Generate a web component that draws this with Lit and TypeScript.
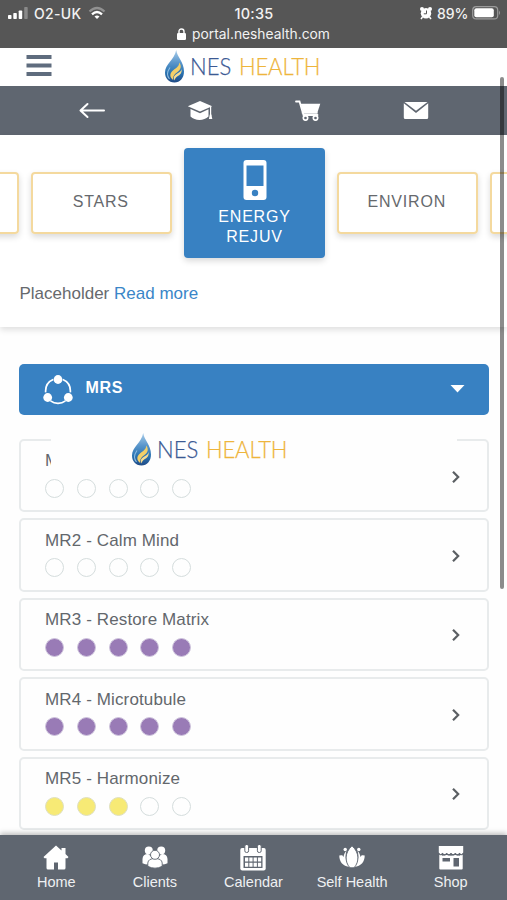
import { LitElement, html, css, svg } from "lit";
import { customElement, property } from "lit/decorators.js";
import { classMap } from "lit/directives/class-map.js";

@customElement("nes-logo")
class NesLogo extends LitElement {
  static styles = css`
    :host { display: flex; width: 166px; height: 36px; align-items: flex-start; }
    .mark { display: block; flex: none; }
    .word { font-family: Lato, "Liberation Sans", sans-serif; font-size: 24px; font-weight: 300; line-height: 30px; white-space: nowrap; -webkit-text-stroke: .25px currentColor; margin-top: 2px; transform-origin: left; transform: scaleX(.92); }
    .blue { color: #3c5a94; margin-left: 5px; width: 49px; }
    .gold { color: #eeb53c; letter-spacing: -.2px; }
  `;
  render() {
    return html`<svg class="mark" width="21" height="36" viewBox="0 0 21 36">
      <defs>
        <linearGradient id="drop" x1="0" y1="0" x2="0" y2="1">
          <stop offset="0" stop-color="#a9cdea" />
          <stop offset=".38" stop-color="#5b97cc" />
          <stop offset=".7" stop-color="#2b74b2" />
          <stop offset="1" stop-color="#204b86" />
        </linearGradient>
      </defs>
      <path d="M12.200 1C13 8 20 12.500 20 22.500C20 29 16 33.500 10.500 33.500C4.500 33.500 1 29 1 23.500C1 15 10.500 11 12.200 1Z" fill="url(#drop)" />
      <path d="M15.200 13.500C17.800 17 17 20.500 13.500 23C10 25.500 8.800 27.500 9.300 31C5.500 28.500 5.300 24.500 9.200 21.300C12.500 18.700 15.200 17.200 15.200 13.500Z" fill="#f3cf68" />
      <path d="M17.500 20C18.300 24 15.800 26 13.500 27.300C11.500 28.600 10.800 29.800 11 31.500C8.900 29 9.700 27 12.500 25C15.500 23 17.300 22.500 17.500 20Z" fill="#f7dc91" />
      <path d="M6 18.500C2.800 23 3 27 5.500 30" fill="none" stroke="#8dbde2" stroke-width="1.100" />
    </svg><span class="word blue">NES</span><span class="word gold">HEALTH</span>`;
  }
}

@customElement("rating-card")
class RatingCard extends LitElement {
  @property() name = "";
  @property({ type: Number }) score = 0;
  @property() tone = "purple";
  static styles = css`
    :host { display: flex; box-sizing: border-box; height: 73.400px; align-items: center; justify-content: space-between;
      padding: 0 25px 0 24px; border: 2px solid #e8ebec; border-radius: 5px; background: #fefefe; }
    .title { font-size: 17px; line-height: 20px; letter-spacing: .13px; color: #63676c; white-space: nowrap; }
    .dots { display: flex; gap: 12.800px; margin-top: 7.500px; }
    .dot { box-sizing: border-box; width: 19px; height: 19px; border-radius: 50%; border: 1.300px solid #d5dddd; }
    .purple { background: #997bb6; border-color: #cfc5dd; }
    .yellow { background: #f7ea75; border-color: #dfe0c0; }
    .body { padding-bottom: 2px; }
    .chevron { display: block; margin-top: 2px; }
  `;
  render() {
    return html`<div class="body">
        <div class="title">${this.name}</div>
        <div class="dots">${[0, 1, 2, 3, 4].map((i) => html`<span class=${classMap({ dot: true, [this.tone]: i < this.score })}></span>`)}</div>
      </div>
      <svg class="chevron" width="12" height="16" viewBox="0 0 12 16"><path d="M3 2.700L8.200 8L3 13.300" fill="none" stroke="#5b5f63" stroke-width="2.200" /></svg>`;
  }
}

const icons = {
  back: svg`<path d="M8.500 4L1.500 10.500L8.500 17M2 10.500H25" fill="none" stroke="#fff" stroke-width="2" stroke-linecap="round" stroke-linejoin="round" />`,
  cap: svg`<path d="M.8 6.200L13 1L25.200 6.200L13 11.500Z" /><path d="M3.500 9L13 13.200L21.500 9.300V16.500C17 21 8 21 3.500 16.500Z" /><path d="M23.600 7V16" stroke="#fff" stroke-width="1.200" /><path d="M22.800 14.500h1.600l.9 4.500h-3.400z" />`,
  cart: svg`<path d="M1 1.500H4.500L8.500 15H22.500M7.500 12.800H22" fill="none" stroke="#fff" stroke-width="1.800" stroke-linecap="round" /><path d="M5.600 3.800H25.300L22.600 12H8Z" /><g fill="none" stroke="#fff" stroke-width="1.700"><circle cx="10.500" cy="18" r="2.200" /><circle cx="20.500" cy="18" r="2.200" /></g>`,
  mail: svg`<path d="M1.500 2H24.500L13 10.800Z" /><path d="M.8 3.200L13 12.900L25.200 3.200V17.500Q25.200 19 23.700 19H2.300Q.8 19 .8 17.500Z" />`,
  home: svg`<path d="M13 .5L18.500 5.500V3H22.500V9L25.500 12L24.500 13.200H22.500V23Q22.500 24.500 21 24.500H15V17.500H11V24.500H5Q3.500 24.500 3.500 23V13.200H1.500L.5 12Z" />`,
  clients: svg`<circle cx="6.800" cy="5.500" r="4" /><circle cx="19.200" cy="5.500" r="4" /><path d="M.5 18.300V14Q.8 9 6 9L10 12V19Q5 20.500 .5 18.300ZM25.500 18.300V14Q25.200 9 20 9L16 12V19Q21 20.500 25.500 18.300Z" /><g stroke="#5f6670" stroke-width=".9"><path d="M5.800 21.300V18Q6.200 13.500 13 13.500Q19.800 13.500 20.200 18V21.300Q13 25 5.800 21.300Z" /><circle cx="13" cy="9.800" r="4.500" /></g>`,
  calendar: svg`<path d="M2 3H24Q25.700 3 25.700 5V23.500Q25.700 25.500 23.700 25.500H2.300Q.3 25.500 .3 23.500V5Q.3 3 2 3Z" /><g stroke="#5f6670" stroke-width="1" fill="#fff"><rect x="4.800" y="-.5" width="3.800" height="8" rx="1.700" /><rect x="17.400" y="-.5" width="3.800" height="8" rx="1.700" /></g><path d="M3.500 11h19v12h-19z" fill="#5f6670" /><path d="M5 12.500h3.300v4H5zM9.300 12.500h3.300v4H9.300zM13.600 12.500h3.300v4h-3.300zM17.900 12.500h3.300v4h-3.300zM5 17.700h3.300v4H5zM9.300 17.700h3.300v4H9.300zM13.600 17.700h3.300v4h-3.300zM17.900 17.700h3.300v4h-3.300z" fill="#fff" />`,
  lotus: svg`<path d="M7.500 6C5.500 11.500 7 18 11 22C3.500 21.500 .2 16 .3 10.500Q2 10 3.300 10.300L4.500 12C4.800 9.500 6 7 7.500 6ZM18.500 6C20.500 11.500 19 18 15 22C22.500 21.500 25.800 16 25.700 10.500Q24 10 22.700 10.300L21.500 12C21.200 9.500 20 7 18.500 6Z" /><circle cx="6.200" cy="4.500" r="1.700" /><circle cx="19.800" cy="4.500" r="1.700" /><path d="M13 .8C20.500 7.500 20.500 17 15 22.800H11C5.500 17 5.500 7.500 13 .8Z" stroke="#5f6670" stroke-width=".9" />`,
  shop: svg`<path d="M.8 1H25.200V7.500Q23.500 10.500 21.500 8Q19.500 10.500 17.300 8Q15.200 10.500 13 8Q10.800 10.500 8.700 8Q6.500 10.500 4.500 8Q2.500 10.500 .8 7.500Z" /><path d="M1.300 8.500L4.500 10.700L8.700 10L13 10.700L17.300 10L21.500 10.700L24.700 8.500V23.500Q24.700 24.500 23.700 24.500H2.300Q1.300 24.500 1.300 23.500Z" /><path d="M1 8.400Q2.500 11 4.500 8.700Q6.500 11 8.700 8.700Q10.800 11 13 8.700Q15.200 11 17.300 8.700Q19.500 11 21.500 8.700Q23.500 11 25 8.400" fill="none" stroke="#5f6670" stroke-width="1.100" /><path d="M4.500 13h7.500v3.500H4.500zM15.500 13h5.500V21.500h-5.500z" fill="#5f6670" />`,
};

const icon = (name: keyof typeof icons, height = 26) =>
  html`<svg width="26" height=${height} viewBox=${`0 0 26 ${height}`} fill="#fff">${icons[name]}</svg>`;

@customElement("app-root")
class AppRoot extends LitElement {
  static styles = css`
    :host { display: flex; flex-direction: column; position: relative; width: 507px; height: 900px; overflow: hidden;
      background: #fefefe; font-family: "Liberation Sans", Arial, sans-serif; color: #66696d; }
    .status { box-sizing: border-box; flex: none; height: 48px; background: #565656; color: #f2f2f2; font-family: Inter, sans-serif; padding-top: 3px; }
    .row { display: grid; grid-template-columns: 1fr auto 1fr; align-items: center; height: 20px; padding: 0 6px 0 8px; font-size: 14px; font-weight: 500; }
    .time { font-size: 14.500px; letter-spacing: .2px; margin-right: 1px; }
    .side { display: flex; align-items: center; }
    .end { justify-content: flex-end; gap: 3.500px; }
    .carrier { margin: 0 7px 0 6px; letter-spacing: .3px; }
    .url { display: flex; align-items: center; justify-content: center; gap: 6px; height: 22px; font-size: 13.800px; }
    .header { display: grid; grid-template-columns: 26px 1fr; flex: none; height: 38px; padding-left: 26px; align-items: center; background: #fff; }
    .menu { margin-bottom: 3px; }
    .logo { margin-left: 112px; }
    .tools { display: flex; flex: none; height: 49px; padding: 0 37.500px; background: #5f6670; align-items: center; }
    .tool { flex: 1; display: flex; justify-content: center; }
    .intro { box-sizing: border-box; flex: none; height: 192px; background: #fff; box-shadow: 0 3px 6px rgba(0,0,0,.12); }
    .carousel { display: flex; width: 690px; margin-left: -122px; gap: 12px; height: 135px; align-items: center; }
    .tab { box-sizing: border-box; flex: none; width: 141px; height: 62px; display: flex; align-items: center; justify-content: center; border: 2px solid #f4d99e;
      border-radius: 4px; box-shadow: 0 3px 6px rgba(0,0,0,.15); font-size: 16px; letter-spacing: .8px; line-height: 20px; text-align: center; padding: 0 1.500px 2px 0; }
    .active { flex-direction: column; height: 110px; border: 0; background: #3881c2; color: #fff; gap: 7px; padding: 2px 0 0; }
    .active-name { width: 90px; }
    .note { padding: 13.500px 19.500px 0; font-size: 17px; line-height: 20px; }
    .link { color: #3a86c8; text-decoration: none; }
    .group { display: flex; flex: none; align-items: center; margin: 36.500px 18.500px 0 19px; height: 51.500px; background: #3881c2; border-radius: 5px; color: #fff; box-sizing: border-box; padding: 0 24px 0 24px; }
    .group-name { flex: 1; margin-left: 12.500px; font-weight: 700; font-size: 16px; letter-spacing: .7px; padding-bottom: 2px; }
    .list { display: flex; flex-direction: column; gap: 6px; margin: 24px 18.500px 0 19px; }
    .float { position: absolute; left: 51px; top: 432px; width: 406px; height: 38px; background: #fefefe; }
    .float-logo { margin-left: 79.500px; }
    .scroll { position: absolute; left: 499.500px; top: 77px; width: 4px; height: 512px; border-radius: 2px; background: rgba(0,0,0,.45); }
    .footer { position: absolute; left: 0; bottom: 0; box-sizing: border-box; width: 507px; height: 65px; padding: 0 7px; display: grid; grid-template-columns: repeat(5, 1fr);
      background: #5f6670; color: #eef0f2; box-shadow: 0 -2px 5px rgba(0,0,0,.25); }
    .item { display: flex; flex-direction: column; align-items: center; padding-top: 10px; gap: 3px; font-size: 14.500px; line-height: 17px; white-space: nowrap; }
  `;
  render() {
    const cards: [string, number, string][] = [
      ["MR1", 0, "purple"], ["MR2 - Calm Mind", 0, "purple"], ["MR3 - Restore Matrix", 5, "purple"],
      ["MR4 - Microtubule", 5, "purple"], ["MR5 - Harmonize", 3, "yellow"],
    ];
    const nav: [keyof typeof icons, string][] = [["home", "Home"], ["clients", "Clients"], ["calendar", "Calendar"], ["lotus", "Self Health"], ["shop", "Shop"]];
    return html`
      <div class="status">
        <div class="row">
          <div class="side">
            <svg width="20" height="12" viewBox="0 0 20 12" fill="#fff"><rect y="8" width="3.500" height="4" rx=".8" /><rect x="5.300" y="6" width="3.500" height="6" rx=".8" /><rect x="10.700" y="3.500" width="3.500" height="8.500" rx=".8" /><rect x="16.200" width="3.500" height="12" rx=".8" opacity=".3" /></svg>
            <span class="carrier">O2-UK</span>
            <svg width="18" height="14" viewBox="0 0 18 14" fill="none" stroke="#fff" stroke-width="2.300"><path d="M1.500 5.500Q9-1.500 16.500 5.500" opacity=".35" /><path d="M4 8.300Q9 3.600 14 8.300" /><path d="M6.500 10.500Q9 8.500 11.500 10.500L9 13Z" fill="#fff" stroke="none" /></svg>
          </div>
          <span class="time">10:35</span>
          <div class="side end">
            <svg width="14" height="14" viewBox="0 0 14 14"><circle cx="3" cy="3" r="2" fill="#fff" /><circle cx="11" cy="3" r="2" fill="#fff" /><circle cx="7" cy="7.300" r="5.200" fill="#fff" /><path d="M3.500 11L2 13M10.500 11L12 13" stroke="#fff" stroke-width="1.500" /><path d="M7.500 4.500V7.800H4.800" fill="none" stroke="#565656" /></svg>
            <span>89%</span>
            <svg width="29" height="14" viewBox="0 0 29 14"><rect x=".7" y=".7" width="25" height="12.200" rx="3.500" fill="none" stroke="#9b9b9b" stroke-width="1.200" /><rect x="2.300" y="2.300" width="19.500" height="9" rx="2" fill="#fff" /><path d="M27 4.500Q29 6.800 27 9Z" fill="#9b9b9b" /></svg>
          </div>
        </div>
        <div class="url">
          <svg width="9" height="12" viewBox="0 0 9 12"><rect y="5" width="9" height="7" rx="1.200" fill="#fff" /><path d="M2 5.500V3.500Q2 1 4.500 1T7 3.500V5.500" fill="none" stroke="#fff" stroke-width="1.400" /></svg>
          <span>portal.neshealth.com</span>
        </div>
      </div>
      <div class="header">
        <svg class="menu" width="26" height="22" viewBox="0 0 26 22" fill="#5f6c7e"><path d="M.5 0h25v4H.5zM.5 8.500h25v4H.5zM.5 17h25v4H.5z" /></svg>
        <nes-logo class="logo"></nes-logo>
      </div>
      <div class="tools">
        <span class="tool">${icon("back", 21)}</span><span class="tool">${icon("cap", 21)}</span>
        <span class="tool">${icon("cart", 21)}</span><span class="tool">${icon("mail", 21)}</span>
      </div>
      <div class="intro">
        <div class="carousel">
          <div class="tab"></div>
          <div class="tab">STARS</div>
          <div class="tab active">
            <svg width="24" height="40" viewBox="0 0 24 40"><rect x=".5" width="23" height="40" rx="3" fill="#fff" /><path d="M3.500 5.500h17V26h-17z" fill="#3881c2" /><circle cx="12" cy="33" r="3.200" fill="#3881c2" /></svg>
            <span class="active-name">ENERGY REJUV</span>
          </div>
          <div class="tab">ENVIRON</div>
          <div class="tab"></div>
        </div>
        <div class="note">Placeholder <a class="link">Read more</a></div>
      </div>
      <div class="group">
        <svg width="30" height="31" viewBox="0 0 30 31"><circle cx="15" cy="17" r="12.400" fill="none" stroke="#fff" stroke-width="1.700" pathLength="360" stroke-dasharray="74 46" stroke-dashoffset="-23" transform="rotate(-90 15 17)" /><g fill="#fff"><circle cx="15" cy="5.500" r="4.400" /><circle cx="4.700" cy="23.500" r="4.400" /><circle cx="25.300" cy="23.500" r="4.400" /></g></svg>
        <span class="group-name">MRS</span>
        <svg width="15" height="8" viewBox="0 0 15 8"><path d="M.5 0h14L7.500 7.500z" fill="#fff" /></svg>
      </div>
      <div class="list">${cards.map(([n, s, t]) => html`<rating-card .name=${n} .score=${s} .tone=${t}></rating-card>`)}</div>
      <div class="float"><nes-logo class="float-logo"></nes-logo></div>
      <div class="footer">${nav.map(([i, label]) => html`<div class="item">${icon(i)}<span>${label}</span></div>`)}</div>
      <div class="scroll"></div>
    `;
  }
}
